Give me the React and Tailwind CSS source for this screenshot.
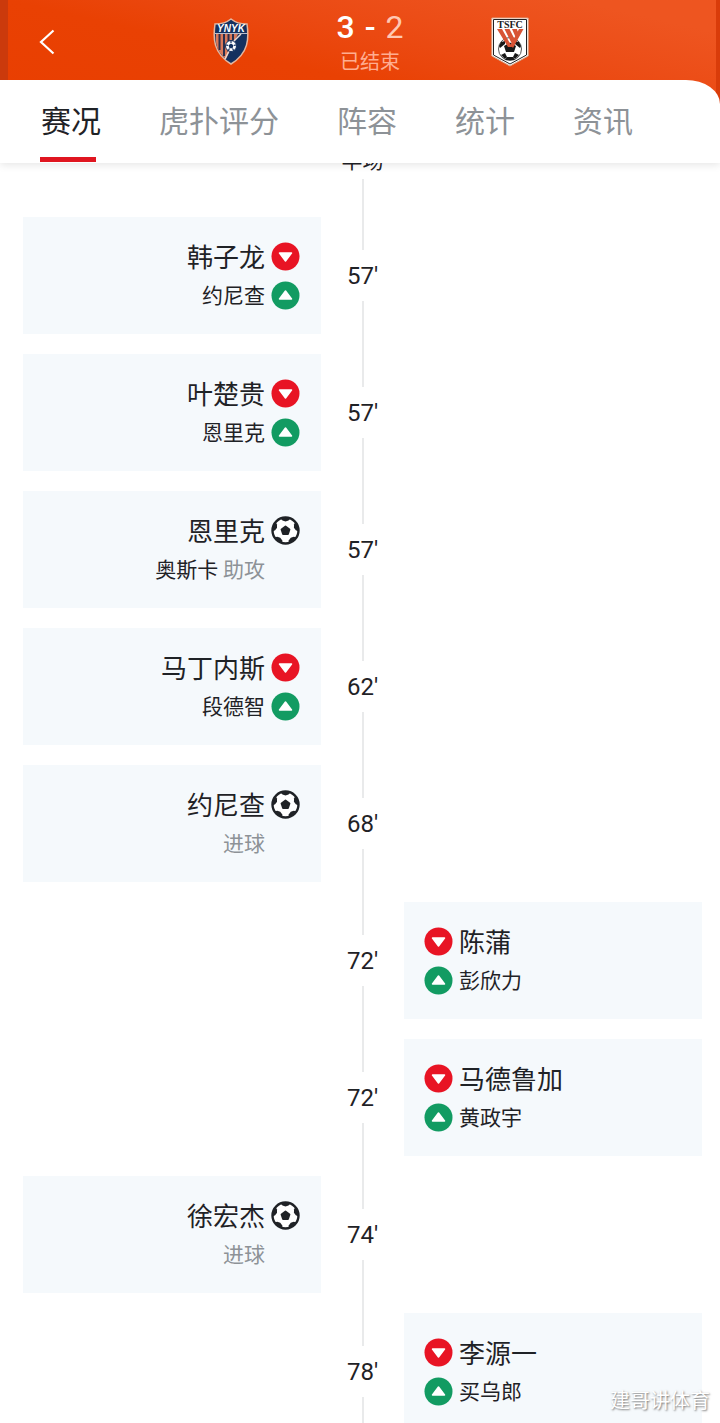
import { useState } from 'react';

const tabs = ['赛况', '虎扑评分', '阵容', '统计', '资讯'];

const events = [
  { id: 1, side: 'home', type: 'sub', minute: 57, out: '韩子龙', in: '约尼查' },
  { id: 2, side: 'home', type: 'sub', minute: 57, out: '叶楚贵', in: '恩里克' },
  { id: 3, side: 'home', type: 'goal', minute: 57, player: '恩里克', assist: '奥斯卡' },
  { id: 4, side: 'home', type: 'sub', minute: 62, out: '马丁内斯', in: '段德智' },
  { id: 5, side: 'home', type: 'goal', minute: 68, player: '约尼查' },
  { id: 6, side: 'away', type: 'sub', minute: 72, out: '陈蒲', in: '彭欣力' },
  { id: 7, side: 'away', type: 'sub', minute: 72, out: '马德鲁加', in: '黄政宇' },
  { id: 8, side: 'home', type: 'goal', minute: 74, player: '徐宏杰' },
  { id: 9, side: 'away', type: 'sub', minute: 78, out: '李源一', in: '买乌郎' },
];

const HomeCrest = () => (
  <svg width="36" height="48" viewBox="0 0 36 48" aria-hidden="true">
    <path d="M18 1C13 5 7 6 2 6C0 20 0 35 18 46C36 35 36 20 34 6C29 6 23 5 18 1Z" fill="#14315f" stroke="#e3b6a0" strokeWidth="1.5" />
    <path d="M3 16H25L13 41C4 34 2 26 3 16Z" fill="#d9795a" />
    <path d="M6.500 16V32M11 16V38M15.500 16V34M20 16V24" stroke="#2b2f4c" strokeWidth="2" />
    <path d="M28 16L20 24M17 31L12 41" stroke="#e8d9d2" strokeWidth="1.500" />
    <path d="M2 15.500H34" stroke="#b9bccb" strokeWidth="1" />
    <text x="18" y="14" textAnchor="middle" fill="#fff" fontFamily="Liberation Sans, sans-serif" fontSize="10" fontWeight="700" fontStyle="italic">YNYK</text>
    <circle cx="18" cy="28" r="5.500" fill="#fff" stroke="#14315f" strokeWidth="1" />
    <path d="M18 25.500L20.500 27.300L19.500 30.200H16.500L15.500 27.300Z" fill="#14315f" />
    <path d="M18 22.500V25M23 27L21 27.300M15 27.300L13 27M16.500 30.500L15 33M19.500 30.500L21 33" stroke="#14315f" strokeWidth="1.200" />
  </svg>
);

const AwayCrest = () => (
  <svg width="38" height="50" viewBox="0 0 38 50" aria-hidden="true">
    <path d="M.8 1H37.200V39L19 49L.8 39Z" fill="#fff" stroke="#d9a487" strokeWidth="1" />
    <path d="M2.500 2.500H35.500V38L19 47L2.500 38Z" fill="#fff" stroke="#222" strokeWidth="1" />
    <text x="19" y="10.500" textAnchor="middle" fill="#222" fontFamily="Liberation Serif, serif" fontSize="10" fontWeight="700">TSFC</text>
    {/* ball */}
    <circle cx="19" cy="32" r="11.500" fill="#fff" stroke="#555" strokeWidth="1" />
    <path d="M19 25.500L25 29L23 35H15L13 29Z" fill="#171717" />
    <path d="M8 29L10 25L14 24L14 27L9 31ZM30 29L28 25L24 24L24 27L29 31ZM10 38L14 36L16 40L14 42ZM28 38L24 36L22 40L24 42ZM16 40L22 40L24 43H14Z" fill="#171717" />
    <path d="M6 12H11L21 30L17 30ZM13.500 12H18.500L23.500 22L21 27ZM21 12H26L27 16L24.500 20ZM28 12H32.500L22 31L19.500 28Z" fill="#d85335" />
  </svg>
);

const SubIcon = ({ direction }) => (
  <svg width="29" height="29" viewBox="0 0 29 29" className="shrink-0" role="img" aria-label={direction === 'out' ? '换下' : '换上'}>
    <circle cx="14.500" cy="14.500" r="14" fill={direction === 'out' ? '#e81424' : '#129b62'} />
    {direction === 'out' ? (
      <path d="M8.500 11H20.500L14.500 19Z" fill="#fff" stroke="#fff" strokeWidth="1.500" strokeLinejoin="round" />
    ) : (
      <path d="M8.500 18H20.500L14.500 10Z" fill="#fff" stroke="#fff" strokeWidth="1.500" strokeLinejoin="round" />
    )}
  </svg>
);

const BallIcon = () => (
  <svg width="29" height="29" viewBox="0 0 29 29" className="shrink-0" role="img" aria-label="进球">
    <circle cx="14.500" cy="14.500" r="13" fill="#fff" stroke="#1f2226" strokeWidth="2.400" />
    <path d="M14.500 10.500L18.500 13.400L17 18H12L10.500 13.400Z" fill="#1f2226" stroke="#1f2226" strokeWidth="1.800" strokeLinejoin="round" />
    <g fill="#1f2226">
      <path d="M9 2L20 2L17.500 4.600L14.500 5.600L11.500 4.600Z" />
      <path d="M9 2L20 2L17.500 4.600L14.500 5.600L11.500 4.600Z" transform="rotate(72 14.500 14.500)" />
      <path d="M9 2L20 2L17.500 4.600L14.500 5.600L11.500 4.600Z" transform="rotate(144 14.500 14.500)" />
      <path d="M9 2L20 2L17.500 4.600L14.500 5.600L11.500 4.600Z" transform="rotate(216 14.500 14.500)" />
      <path d="M9 2L20 2L17.500 4.600L14.500 5.600L11.500 4.600Z" transform="rotate(288 14.500 14.500)" />
    </g>
  </svg>
);

const EventCard = ({ event }) => {
  const home = event.side === 'home';
  const line = home
    ? 'flex h-[39px] flex-row-reverse items-center gap-[6px]'
    : 'flex h-[39px] items-center gap-[6px]';

  return (
    <div className={home ? 'col-start-1 h-[117px] bg-[#f5f9fc] px-[21px] py-5' : 'col-start-3 h-[117px] bg-[#f5f9fc] px-5 py-5'}>
      <div className={line}>
        {event.type === 'sub' ? <SubIcon direction="out" /> : <BallIcon />}
        <span className="pb-[2px] text-[26px]">{event.type === 'sub' ? event.out : event.player}</span>
      </div>
      <div className={line}>
        {event.type === 'sub' ? <SubIcon direction="in" /> : <span className="w-[29px]" />}
        {event.type === 'sub' ? (
          <span className="pb-[2px] text-[21px]">{event.in}</span>
        ) : (
          <span className="pb-[2px] text-[21px]">
            {event.assist && `${event.assist} `}
            <span className="text-[#8d9297]">{event.assist ? '助攻' : '进球'}</span>
          </span>
        )}
      </div>
    </div>
  );
};

const App = () => {
  const [active, setActive] = useState('赛况');

  return (
    <div className="relative flex h-screen flex-col overflow-hidden bg-white font-['Noto_Sans_CJK_SC',sans-serif] text-[#1f2226]">
      {/* Score header */}
      <div className="z-10 shrink-0 border-r-4 border-l-8 border-r-[#d93c0a] border-l-[#cb3a0c] bg-linear-to-bl from-[#ee5520] from-10% via-[#e94103] via-50% to-[#e93d00] shadow-[0_2px_8px_rgba(0,0,0,0.1)]">
        <header className="grid h-20 grid-cols-[56px_1fr_38px] items-center">
          <button aria-label="返回" className="flex justify-end pt-1 pr-2">
            <svg width="18" height="28" viewBox="0 0 18 28" fill="none" stroke="#fff" strokeWidth="2.200">
              <path d="M15.500 2.500L3 14L15.500 25.500" />
            </svg>
          </button>
          <div className="flex items-center justify-center gap-[87px] pt-1">
            <HomeCrest />
            <div className="flex flex-col items-center pt-[2px]">
              <div className="flex h-9 items-center gap-[10px] font-['Roboto',sans-serif] text-[32px] font-medium text-white">
                <span>3</span>
                <span>-</span>
                <span className="font-normal text-[#ffc8b3]">2</span>
              </div>
              <span className="text-[20px] leading-[32px] text-[#ffad91]">已结束</span>
            </div>
            <AwayCrest />
          </div>
        </header>
        <nav className="-mr-1 -ml-2 flex h-[83px] gap-[57px] rounded-tr-[34px_24px] bg-white pl-10">
          {tabs.map((tab) => (
            <button key={tab} onClick={() => setActive(tab)} className="flex shrink-0 flex-col">
              <span className={tab === active ? 'flex h-[77px] items-center pt-[2px] pl-px text-[30px]' : 'flex h-[77px] items-center pt-[2px] pl-px text-[30px] text-[#8d9297]'}>
                {tab}
              </span>
              {tab === active && <span className="h-[5px] w-14 bg-[#e01620]" />}
            </button>
          ))}
        </nav>
      </div>

      <main className="-mt-[18px] flex-1 overflow-hidden pr-[18px] pl-[23px]">
        <div className="flex h-[62px] flex-col items-center">
          <span className="text-[21px] leading-[28px]">半场</span>
          <span className="mt-[6px] w-[2px] flex-1 bg-[#e9eaeb]" />
        </div>
        {events.map((event) => (
          <div key={event.id} className="grid h-[137px] grid-cols-[1fr_83px_1fr] grid-rows-1 items-center">
            <EventCard event={event} />
            <div className="col-start-2 row-start-1 flex h-full flex-col items-center">
              <span className="w-[2px] flex-1 bg-[#e9eaeb]" />
              <span className="flex h-[51px] items-center font-['Roboto',sans-serif] text-[24px]">{event.minute}'</span>
              <span className="w-[2px] flex-1 bg-[#e9eaeb]" />
            </div>
          </div>
        ))}
      </main>

      <span className="absolute right-[10px] bottom-[8px] text-[20px] leading-[30px] text-white [text-shadow:1px_1px_2px_#777]">建哥讲体育</span>
    </div>
  );
};

export default App;
